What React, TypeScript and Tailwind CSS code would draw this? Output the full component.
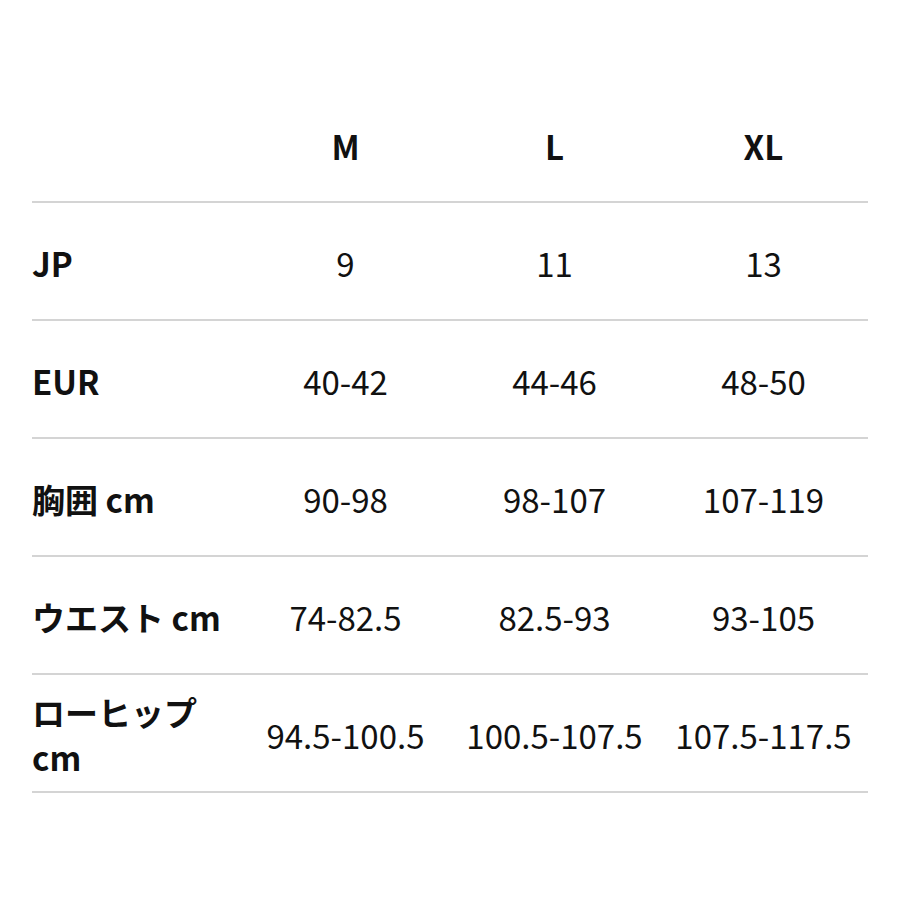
import React from 'react';

const sizes = ['M', 'L', 'XL'];

const rows: { label: React.ReactNode; values: string[] }[] = [
  { label: 'JP', values: ['9', '11', '13'] },
  { label: 'EUR', values: ['40-42', '44-46', '48-50'] },
  { label: '胸囲 cm', values: ['90-98', '98-107', '107-119'] },
  { label: 'ウエスト cm', values: ['74-82.5', '82.5-93', '93-105'] },
  {
    label: (
      <>
        ローヒップ
        <br />
        cm
      </>
    ),
    values: ['94.5-100.5', '100.5-107.5', '107.5-117.5'],
  },
];

export default function App() {
  return (
    <div
      className="w-[900px] h-[900px] bg-white text-[#111] px-[32px] pt-[90px]"
      style={{ fontFamily: '"Noto Sans CJK JP", "Noto Sans", sans-serif' }}
    >
      <div className="grid grid-cols-4 items-center h-[113px] pt-[2px] border-b-2 border-[#d4d4d4]">
        <div />
        {sizes.map((s) => (
          <div key={s} className="text-center text-[33px] font-bold leading-none">
            {s}
          </div>
        ))}
      </div>
      {rows.map((r, i) => (
        <div
          key={i}
          className="grid grid-cols-4 items-center h-[118px] pt-[4px] border-b-2 border-[#d4d4d4]"
        >
          <div className="text-[33px] font-bold leading-[45px]">{r.label}</div>
          {r.values.map((v, j) => (
            <div key={j} className="text-center text-[33px] leading-[45px] whitespace-nowrap">
              {v}
            </div>
          ))}
        </div>
      ))}
    </div>
  );
}
